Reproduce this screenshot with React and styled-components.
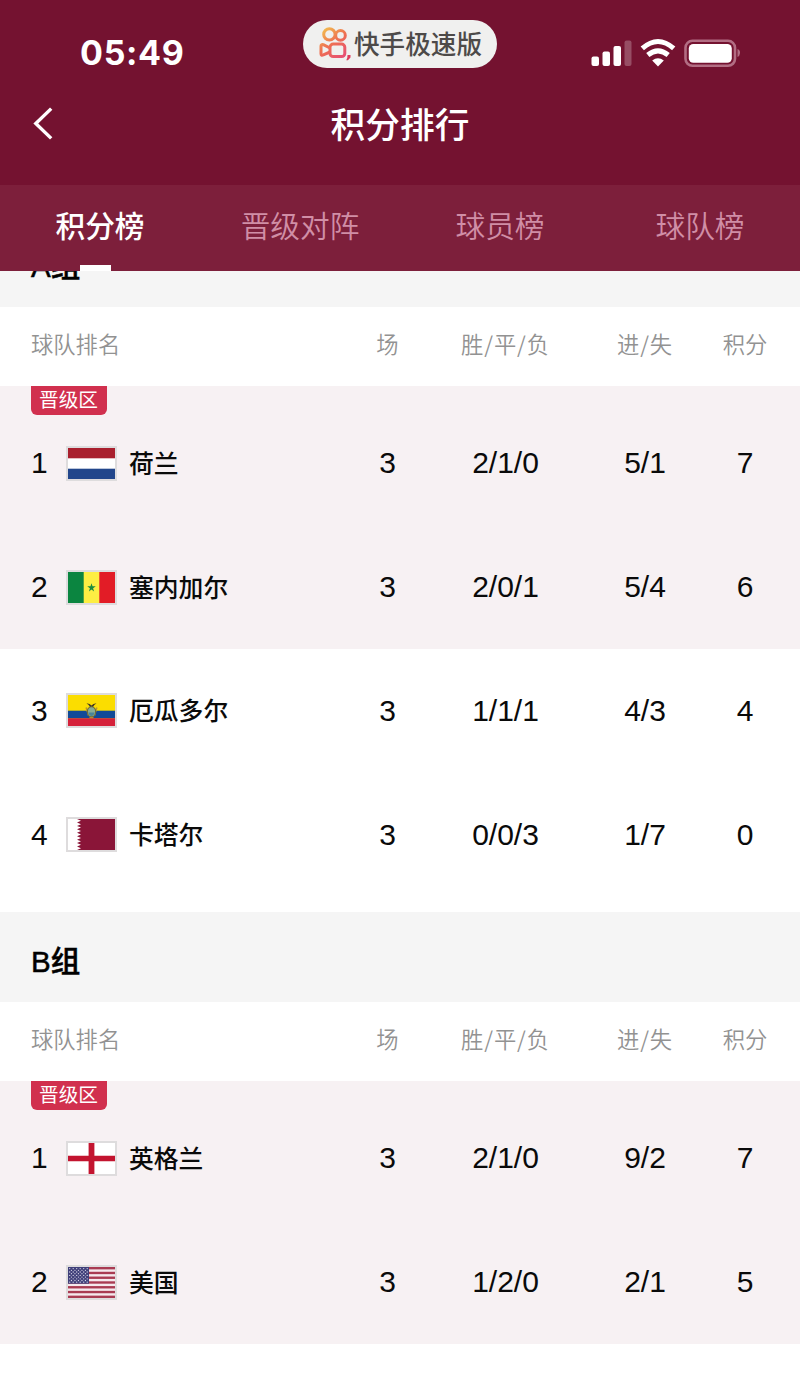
import React from "react";
import styled, { createGlobalStyle, css } from "styled-components";

const cjk = '"Noto Sans CJK SC", sans-serif';

const GlobalStyle = createGlobalStyle`
  * { box-sizing: border-box; }
  body { margin: 0; background: #fff; }
`;

const Screen = styled.div`
  width: 800px;
  height: 1386px;
  overflow: hidden;
  display: flex;
  flex-direction: column;
  background: #fff;
  font-family: "Liberation Sans", ${cjk};
  color: #0a0a0a;
`;

const Header = styled.header`
  flex: none;
  height: 185px;
  background: #741230;
  color: #fff;
`;

const StatusBar = styled.div`
  height: 88px;
  padding: 20px 60px 0 80px;
  display: grid;
  grid-template-columns: 223px 194px 1fr;
  align-items: start;
`;

const Clock = styled.div`
  font: 700 34px/36px Inter, sans-serif;
  letter-spacing: 0.7px;
  padding-top: 15px;
`;

const AppPill = styled.div`
  width: 194px;
  height: 48px;
  border-radius: 24px;
  background: #f0f0ef;
  color: #4d4a49;
  display: flex;
  align-items: center;
  padding-left: 16px;
  gap: 2px;
  font: 500 25.6px/44px ${cjk};
  white-space: nowrap;
  svg { flex: none; }
`;

const PillLabel = styled.span`
  padding-bottom: 3px;
`;

const StatusIcons = styled.div`
  display: flex;
  justify-content: flex-end;
  padding-top: 18px;
`;

const TitleBar = styled.div`
  height: 72px;
  padding: 0 32px;
  display: grid;
  grid-template-columns: 22px 1fr 22px;
  align-items: center;
`;

const Title = styled.h1`
  margin: 0;
  padding-bottom: 3px;
  text-align: center;
  font: 500 34.7px/50px ${cjk};
`;

const Tabs = styled.nav`
  flex: none;
  height: 86px;
  display: grid;
  grid-template-columns: repeat(4, 1fr);
  background: #7d1f3b;
  position: relative;
  z-index: 1;
`;

const Tab = styled.div`
  display: flex;
  flex-direction: column;
  align-items: center;
  padding-top: 18px;
  font: ${(p) => (p.$active ? 500 : 350)} 29.7px/44px ${cjk};
  color: ${(p) => (p.$active ? "#fff" : "#d08ea6")};
`;

const Indicator = styled.span`
  width: 31px;
  height: 6px;
  margin: auto 9px 0 0;
  background: #fff;
`;

const ScrollArea = styled.main`
  flex: 1;
  min-height: 0;
  overflow: hidden;
`;

const Scrolled = styled.div`
  margin-top: -54px;
`;

const GroupTitle = styled.h2`
  margin: 0;
  height: 90px;
  padding: 10px 31px 0;
  background: #f5f5f5;
  font: 500 29.5px/80px "Liberation Sans", ${cjk};
  color: #000;
  -webkit-text-stroke: 0.5px #000;
`;

const columns = css`
  display: grid;
  grid-template-columns: 306px 101px 135px 144px 56px;
  align-items: center;
  padding-left: 31px;
`;

const ColumnHeads = styled.div`
  ${columns}
  height: 79px;
  padding-bottom: 7px;
  font: 350 22.3px/32px ${cjk};
  color: #929292;
  white-space: nowrap;
`;

const HeadCell = styled.div`
  text-align: ${(p) => (p.$first ? "left" : "center")};
  letter-spacing: ${(p) => (p.$slashed ? "0.9px" : "0")};
`;

const Zone = styled.section`
  height: 263px;
  background: ${(p) => (p.$promoted ? "#f7f1f3" : "#fff")};
`;

const BadgeStrip = styled.div`
  height: 15.6px;
  padding-left: 31px;
`;

const Badge = styled.div`
  width: 76px;
  height: 29px;
  border-radius: 0 0 6px 6px;
  background: #d1304e;
  color: #fff;
  text-align: center;
  padding-right: 1px;
  font: 400 19.7px/26px ${cjk};
`;

const Row = styled.div`
  ${columns}
  height: 123.7px;
  font-size: 30px;
  line-height: 36px;
`;

const Team = styled.div`
  display: flex;
  align-items: center;
`;

const Rank = styled.span`
  width: 35px;
`;

const FlagFrame = styled.span`
  width: 51px;
  height: 35px;
  padding: 2px;
  background: #dedcdd;
  display: flex;
`;

const TeamName = styled.span`
  margin-left: 12px;
  padding-bottom: 3px;
  font: 500 24.8px/36px ${cjk};
`;

const Cell = styled.div`
  text-align: center;
`;

function Signal() {
  return (
    <svg width="42" height="30" viewBox="0 0 42 30" fill="#fff">
      <rect x="1.5" y="18.5" width="7.5" height="9.5" rx="2" />
      <rect x="12.5" y="13.5" width="7.5" height="14.5" rx="2" />
      <rect x="23.5" y="8" width="7.5" height="20" rx="2" />
      <rect x="34.5" y="2.5" width="7" height="25.5" rx="2" opacity=".25" />
    </svg>
  );
}

function Wifi() {
  return (
    <svg width="52" height="30" viewBox="0 0 52 30" fill="none" stroke="#fff" strokeWidth="5">
      <path d="M10.3 10.4Q26 -3.4 41.7 10.4" />
      <path d="M15.8 17Q26 8.6 36.2 17" />
      <path d="M26 28.5L20.2 22.6Q26 18 31.8 22.6Z" fill="#fff" stroke="none" />
    </svg>
  );
}

function Battery() {
  return (
    <svg width="56" height="30" viewBox="0 0 56 30">
      <rect x="1.5" y="2.8" width="49.5" height="25" rx="7" fill="none" stroke="#b26d83" strokeWidth="2.6" />
      <rect x="4.8" y="6" width="43" height="18.7" rx="4.5" fill="#fff" />
      <path d="M53.5 11Q56.5 12.2 56 15.3Q55.8 18 53.5 19Z" fill="#b26d83" />
    </svg>
  );
}

function AppLogo() {
  return (
    <svg width="33" height="34" viewBox="0 0 33 34" fill="none" stroke="url(#warm)" strokeWidth="3">
      <defs>
        <linearGradient id="warm" gradientUnits="userSpaceOnUse" x1="4" y1="3" x2="25" y2="31">
          <stop offset="0" stopColor="#f2b84f" />
          <stop offset=".45" stopColor="#ee7052" />
          <stop offset="1" stopColor="#e64d76" />
        </linearGradient>
      </defs>
      <circle cx="10.4" cy="7.4" r="5.7" />
      <circle cx="21.5" cy="8.4" r="4.8" />
      <rect x="11" y="17" width="14.8" height="12.6" rx="3.2" />
      <path d="M11 21L4.3 17.7Q2 17.1 2 19V26.7Q2 28.8 4.3 27.9L11 25" strokeLinejoin="round" />
      <path d="M28.5 28h3v2.6l-2.6 2.6h-1.6l1-2.4Z" fill="#dc3b5c" stroke="none" />
    </svg>
  );
}

function BackArrow() {
  return (
    <svg width="22" height="34" viewBox="0 0 22 34" fill="none" stroke="#fff" strokeWidth="3.4">
      <path d="M19.2 1.6L3.8 16.5L19.2 31.4" />
    </svg>
  );
}

const stars = [];
for (let r = 0; r < 9; r++) {
  for (let c = 0; c < (r % 2 ? 5 : 6); c++) {
    stars.push([1.7 + c * 3.5 + (r % 2 ? 1.75 : 0), 1.6 + r * 1.7]);
  }
}

const flagArt = {
  nl: (
    <>
      <rect width="47" height="31" fill="#fff" />
      <rect width="47" height="10.3" fill="#a91f2d" />
      <rect y="20.7" width="47" height="10.3" fill="#22468b" />
    </>
  ),
  sn: (
    <>
      <rect width="47" height="31" fill="#fdee43" />
      <rect width="15.7" height="31" fill="#0b8540" />
      <rect x="31.3" width="15.7" height="31" fill="#e21c26" />
      <path
        d="M23.5 11.2L24.5 14.3H27.8L25.1 16.2L26.1 19.4L23.5 17.5L20.9 19.4L21.9 16.2L19.2 14.3H22.5Z"
        fill="#1a8a3f"
      />
    </>
  ),
  ec: (
    <>
      <rect width="47" height="31" fill="#fbdd00" />
      <rect y="15.7" width="47" height="7.7" fill="#114a97" />
      <rect y="23.3" width="47" height="7.7" fill="#d5213a" />
      <path d="M18.5 8.6Q21 7.8 23.5 10.5Q26 7.8 28.5 8.6Q26.3 9.6 25 12H22Q20.7 9.6 18.5 8.6Z" fill="#433722" />
      <path d="M18.2 12.5L20.6 20.5M28.8 12.5L26.4 20.5" stroke="#b79334" strokeWidth="1.6" />
      <ellipse cx="23.5" cy="16.8" rx="4.1" ry="5.1" fill="#87ad93" stroke="#6d6a35" strokeWidth="1.1" />
      <path d="M20.4 17.5H26.6Q26 20.7 23.5 21Q21 20.7 20.4 17.5Z" fill="#4a8598" />
      <path d="M21.5 22.5H25.5" stroke="#b48a37" strokeWidth="1.3" />
    </>
  ),
  qa: (
    <>
      <rect width="47" height="31" fill="#fff" />
      <path
        d={"M47 0H9" + Array.from({ length: 9 }, (_, i) => `L13 ${(i + 0.5) * 3.44}L9 ${(i + 1) * 3.44}`).join("") + "H47Z"}
        fill="#8a1538"
      />
    </>
  ),
  en: (
    <>
      <rect width="47" height="31" fill="#fff" />
      <path d="M20.6 0H26.4V12.7H47V18.3H26.4V31H20.6V18.3H0V12.7H20.6Z" fill="#c3142f" />
    </>
  ),
  us: (
    <>
      <rect width="47" height="31" fill="#f5e9ed" />
      {Array.from({ length: 7 }, (_, i) => (
        <rect key={i} y={i * 4.77} width="47" height="2.38" fill="#a93b52" />
      ))}
      <rect width="21" height="16.7" fill="#40407a" />
      {stars.map(([x, y], i) => (
        <circle key={i} cx={x} cy={y} r=".65" fill="#d6d4e6" />
      ))}
    </>
  ),
};

function Flag({ code }) {
  return (
    <FlagFrame>
      <svg width="47" height="31" viewBox="0 0 47 31">{flagArt[code]}</svg>
    </FlagFrame>
  );
}

const groups = [
  {
    name: "A组",
    promoted: [
      [1, "nl", "荷兰", "3", "2/1/0", "5/1", "7"],
      [2, "sn", "塞内加尔", "3", "2/0/1", "5/4", "6"],
    ],
    others: [
      [3, "ec", "厄瓜多尔", "3", "1/1/1", "4/3", "4"],
      [4, "qa", "卡塔尔", "3", "0/0/3", "1/7", "0"],
    ],
  },
  {
    name: "B组",
    promoted: [
      [1, "en", "英格兰", "3", "2/1/0", "9/2", "7"],
      [2, "us", "美国", "3", "1/2/0", "2/1", "5"],
    ],
    others: [],
  },
];

function TeamRow({ data }) {
  const [rank, code, name, ...stats] = data;
  return (
    <Row>
      <Team>
        <Rank>{rank}</Rank>
        <Flag code={code} />
        <TeamName>{name}</TeamName>
      </Team>
      {stats.map((value, i) => (
        <Cell key={i}>{value}</Cell>
      ))}
    </Row>
  );
}

function Group({ group }) {
  return (
    <>
      <GroupTitle>{group.name}</GroupTitle>
      <ColumnHeads>
        <HeadCell $first>球队排名</HeadCell>
        <HeadCell>场</HeadCell>
        <HeadCell $slashed>胜/平/负</HeadCell>
        <HeadCell $slashed>进/失</HeadCell>
        <HeadCell>积分</HeadCell>
      </ColumnHeads>
      <Zone $promoted>
        <BadgeStrip>
          <Badge>晋级区</Badge>
        </BadgeStrip>
        {group.promoted.map((t) => (
          <TeamRow key={t[0]} data={t} />
        ))}
      </Zone>
      <Zone>
        {group.others.map((t) => (
          <TeamRow key={t[0]} data={t} />
        ))}
      </Zone>
    </>
  );
}

export default function App() {
  return (
    <Screen>
      <GlobalStyle />
      <Header>
        <StatusBar>
          <Clock>05:49</Clock>
          <AppPill>
            <AppLogo />
            <PillLabel>快手极速版</PillLabel>
          </AppPill>
          <StatusIcons>
            <Signal />
            <Wifi />
            <Battery />
          </StatusIcons>
        </StatusBar>
        <TitleBar>
          <BackArrow />
          <Title>积分排行</Title>
        </TitleBar>
      </Header>
      <Tabs>
        <Tab $active>
          积分榜
          <Indicator />
        </Tab>
        <Tab>晋级对阵</Tab>
        <Tab>球员榜</Tab>
        <Tab>球队榜</Tab>
      </Tabs>
      <ScrollArea>
        <Scrolled>
          {groups.map((g) => (
            <Group key={g.name} group={g} />
          ))}
        </Scrolled>
      </ScrollArea>
    </Screen>
  );
}
